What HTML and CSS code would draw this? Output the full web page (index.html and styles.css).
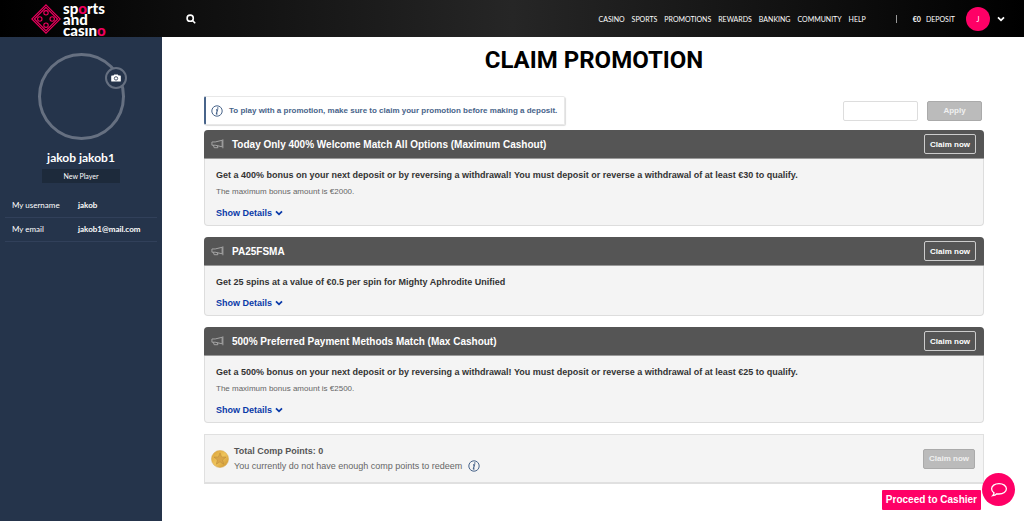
FILE: index.html
```html
<!DOCTYPE html>
<html lang="en">
  <head>
    <meta charset="utf-8" />
    <meta name="viewport" content="width=device-width, initial-scale=1" />
    <title>Claim Promotion</title>
    <link rel="stylesheet" href="styles.css">
  </head>
  <body>
    <svg class="sprite" aria-hidden="true">
      <symbol id="icon-horn" viewBox="0 0 14 12">
        <path d="M12 2 4.500 3.800H1v3.500h3.500L12 9z M12.800 1v9.600 M2.600 7.400 3.400 10h4l-.4-2" fill="none" stroke="currentColor" stroke-width="1" />
      </symbol>
      <symbol id="icon-info" viewBox="0 0 12 12">
        <circle cx="6" cy="6" r="5.2" fill="none" stroke="currentColor" stroke-width="1" />
        <path d="M5 4.9h1.5L5.4 8.7c-.1.5.4.4 1.1 0" fill="none" stroke="currentColor" stroke-width="1.2" />
        <circle cx="6.8" cy="3" r=".8" fill="currentColor" />
      </symbol>
      <symbol id="icon-chevron" viewBox="0 0 8 6">
        <path d="M1 1.4 4 4.3l3-2.9" fill="none" stroke="currentColor" stroke-width="1.8" />
      </symbol>
    </svg>

    <header class="header">
      <a href="#" class="logo">
        <svg class="logo-mark" viewBox="0 0 30 30" aria-hidden="true">
          <path d="M15 .8 29.2 15 15 29.2.8 15z M15 3.4 26.6 15 15 26.6 3.4 15z" />
          <circle cx="15" cy="8.800" r="2.200" />
          <circle cx="15" cy="21.200" r="2.200" />
          <circle cx="8.800" cy="15" r="2.200" />
          <circle cx="21.200" cy="15" r="2.200" />
        </svg>
        <span class="logo-text">sp<b>o</b>rts<br />and<br />casın<b>o</b></span>
      </a>
      <button type="button" class="search-button" aria-label="Search">
        <svg viewBox="0 0 10 10">
          <circle cx="4.2" cy="4.2" r="3.1" />
          <path d="m6.5 6.5 2.7 2.7" />
        </svg>
      </button>
      <nav class="nav">
        <a href="#">CASINO</a>
        <a href="#">SPORTS</a>
        <a href="#">PROMOTIONS</a>
        <a href="#">REWARDS</a>
        <a href="#">BANKING</a>
        <a href="#">COMMUNITY</a>
        <a href="#">HELP</a>
      </nav>
      <div class="account">
        <span class="balance">€0</span>
        <a href="#">DEPOSIT</a>
        <button type="button" class="user-button">
          <span class="initial">J</span>
          <svg class="chevron"><use href="#icon-chevron" /></svg>
        </button>
      </div>
    </header>

    <div class="page">
      <aside class="sidebar">
        <div class="avatar">
          <button type="button" class="camera-button" aria-label="Change picture">
            <svg viewBox="0 0 10 8">
              <path d="M3.2.4h3.6l.7 1.2h1.7q.6 0 .6.6v4.8q0 .6-.6.6H.8q-.6 0-.6-.6V2.2q0-.6.6-.6h1.7z" fill="#fff" />
              <circle cx="5" cy="4.4" r="1.7" fill="none" stroke="#25344b" stroke-width=".8" />
            </svg>
          </button>
        </div>
        <h2 class="player-name">jakob jakob1</h2>
        <div class="player-level">New Player</div>
        <dl class="details">
          <div class="detail">
            <dt>My username</dt>
            <dd>jakob</dd>
          </div>
          <div class="detail">
            <dt>My email</dt>
            <dd>jakob1@mail.com</dd>
          </div>
        </dl>
      </aside>

      <main class="main">
        <h1 class="title">CLAIM PROMOTION</h1>

        <div class="toolbar">
          <div class="notice">
            <svg class="info"><use href="#icon-info" /></svg>
            To play with a promotion, make sure to claim your promotion before making a deposit.
          </div>
          <form class="code-form">
            <input type="text" class="code-input" aria-label="Promotion code" />
            <button type="button" class="button button-disabled">Apply</button>
          </form>
        </div>

        <section class="promo">
          <div class="promo-header">
            <svg class="horn"><use href="#icon-horn" /></svg>
            <h3>Today Only 400% Welcome Match All Options (Maximum Cashout)</h3>
            <button type="button" class="button button-claim">Claim now</button>
          </div>
          <div class="promo-body">
            <p class="promo-text">Get a 400% bonus on your next deposit or by reversing a withdrawal! You must deposit or reverse a withdrawal of at least €30 to qualify.</p>
            <p class="promo-note">The maximum bonus amount is €2000.</p>
            <a href="#" class="show-details">Show Details <svg class="chevron"><use href="#icon-chevron" /></svg></a>
          </div>
        </section>

        <section class="promo">
          <div class="promo-header">
            <svg class="horn"><use href="#icon-horn" /></svg>
            <h3>PA25FSMA</h3>
            <button type="button" class="button button-claim">Claim now</button>
          </div>
          <div class="promo-body">
            <p class="promo-text">Get 25 spins at a value of €0.5 per spin for Mighty Aphrodite Unified</p>
            <a href="#" class="show-details">Show Details <svg class="chevron"><use href="#icon-chevron" /></svg></a>
          </div>
        </section>

        <section class="promo">
          <div class="promo-header">
            <svg class="horn"><use href="#icon-horn" /></svg>
            <h3>500% Preferred Payment Methods Match (Max Cashout)</h3>
            <button type="button" class="button button-claim">Claim now</button>
          </div>
          <div class="promo-body">
            <p class="promo-text">Get a 500% bonus on your next deposit or by reversing a withdrawal! You must deposit or reverse a withdrawal of at least €25 to qualify.</p>
            <p class="promo-note">The maximum bonus amount is €2500.</p>
            <a href="#" class="show-details">Show Details <svg class="chevron"><use href="#icon-chevron" /></svg></a>
          </div>
        </section>

        <section class="points">
          <svg class="coin" viewBox="0 0 18 18" aria-hidden="true">
            <defs>
              <linearGradient id="gold" x1="0" y1="0" x2="1" y2="1">
                <stop offset="0" stop-color="#d9a035" />
                <stop offset=".5" stop-color="#efc45c" />
                <stop offset="1" stop-color="#c98f2b" />
              </linearGradient>
            </defs>
            <circle cx="9" cy="9" r="8.5" fill="url(#gold)" stroke="#d8ab55" stroke-width=".6" />
            <path d="m9 2.800 1.600 4.100 4.400.2-3.400 2.800 1.100 4.300L9 11.800l-3.700 2.400 1.100-4.300L3 7.100l4.400-.2z" fill="#d9a548" stroke="#b98a38" stroke-width=".5" />
          </svg>
          <div class="points-text">
            <strong>Total Comp Points: 0</strong>
            <p>You currently do not have enough comp points to redeem <svg class="info"><use href="#icon-info" /></svg></p>
          </div>
          <button type="button" class="button button-disabled">Claim now</button>
        </section>

        <a href="#" class="cashier">Proceed to Cashier</a>
      </main>
    </div>

    <button type="button" class="chat-button" aria-label="Chat">
      <svg viewBox="0 0 18 16">
        <path d="M9 1.6c4.3 0 7.4 2.3 7.4 5.2S13.300 12 9 12c-.8 0-1.500-.1-2.200-.2-1 1-2.400 1.700-4.100 1.900.8-.8 1.200-1.700 1.300-2.800C2.400 9.900 1.600 8.500 1.600 6.800 1.600 3.900 4.700 1.600 9 1.600z" />
      </svg>
    </button>
  </body>
</html>
```

FILE: styles.css
```css
* {
  box-sizing: border-box;
}

body {
  margin: 0;
  min-height: 100vh;
  display: flex;
  flex-direction: column;
  font-family: "Liberation Sans", Arial, sans-serif;
  font-size: 9px;
  color: #333;
  background: #fff;
}

h1,
h2,
h3,
p,
dl,
dd {
  margin: 0;
}

a {
  color: inherit;
  text-decoration: none;
}

button {
  font: inherit;
  color: inherit;
  padding: 0;
  border: none;
  background: none;
  cursor: pointer;
}

.sprite {
  display: none;
}

.chevron {
  width: 8px;
  height: 6px;
}

.info {
  width: 12px;
  height: 12px;
  flex: none;
  color: #48648a;
}

/* header */

.header {
  display: flex;
  align-items: center;
  height: 37px;
  padding: 0 19px 0 31px;
  color: #fff;
  font-family: Lato, sans-serif;
  font-size: 7px;
  background: linear-gradient(90deg, #000 0%, #262626 50%, #000 100%);
}

.logo {
  display: flex;
  align-items: center;
  gap: 2px;
  width: 155px;
}

.logo-mark {
  width: 30px;
  height: 30px;
  fill: none;
  stroke: #f0005f;
  stroke-width: 1.1;
}

.logo-text {
  font-family: Lato, sans-serif;
  font-size: 15px;
  font-weight: 900;
  line-height: 11px;
  padding-top: 1px;
}

.logo-text b {
  font-weight: inherit;
  color: #f0005f;
}

.search-button {
  width: 10px;
  height: 10px;
}

.search-button svg {
  display: block;
  fill: none;
  stroke: #fff;
  stroke-width: 1.6;
}

.nav {
  display: flex;
  gap: 7px;
  margin-left: auto;
}

.account {
  display: flex;
  align-items: center;
  gap: 5px;
  margin-left: 30px;
}

.balance {
  padding-left: 16px;
  border-left: 1px solid #999;
  font-weight: 700;
}

.user-button {
  display: flex;
  align-items: center;
  gap: 7px;
  margin-left: 6px;
}

.initial {
  width: 24px;
  border-radius: 50%;
  line-height: 24px;
  background: #ff0066;
}

/* sidebar */

.page {
  flex: 1;
  display: flex;
}

.sidebar {
  width: 162px;
  flex: none;
  padding: 16px 5px;
  color: #fff;
  font-family: Lato, sans-serif;
  font-size: 8px;
  background: #25344b;
}

.avatar {
  position: relative;
  width: 87px;
  height: 87px;
  margin: 0 auto 11px;
  border: 3px solid #667081;
  border-radius: 50%;
}

.camera-button {
  position: absolute;
  top: 11px;
  right: -5px;
  display: flex;
  align-items: center;
  justify-content: center;
  width: 22px;
  height: 22px;
  border: 2px solid #667081;
  border-radius: 50%;
  background: #25344b;
}

.camera-button svg {
  width: 10px;
  height: 8px;
}

.player-name {
  font-size: 12px;
  line-height: 14px;
  text-align: center;
}

.player-level {
  width: 78px;
  margin: 4px auto 11px;
  line-height: 14px;
  font-size: 7px;
  text-align: center;
  background: #1d2a3b;
}

.detail {
  display: flex;
  padding: 0 7px;
  line-height: 23px;
  border-bottom: 1px solid #31405a;
}

.detail dt {
  width: 66px;
}

.detail dd {
  font-weight: 700;
}

/* main */

.main {
  flex: 1;
  display: flex;
  flex-direction: column;
  padding: 9px 40px 10px 42px;
}

.title {
  font-family: Roboto, sans-serif;
  font-size: 24px;
  font-weight: 700;
  line-height: 28px;
  text-align: center;
  color: #000;
}

.toolbar {
  display: flex;
  align-items: center;
  justify-content: space-between;
  margin: 22px 0 5px;
}

.notice {
  display: flex;
  align-items: center;
  gap: 6px;
  height: 29px;
  padding: 0 7px 0 5px;
  font-size: 8px;
  font-weight: 700;
  color: #48648a;
  border: 1px solid #e8e8e8;
  border-left: 2px solid #48648a;
  border-radius: 2px;
  box-shadow: 1px 1px 1px #ddd;
}

.code-form {
  display: flex;
  gap: 9px;
  padding-right: 2px;
}

.code-input {
  width: 75px;
  height: 20px;
  border: 1px solid #ddd;
  border-radius: 2px;
}

.button {
  height: 20px;
  font-size: 8px;
  font-weight: 700;
  color: #fff;
  border: 1px solid #ccc;
  border-radius: 2px;
}

.button-disabled {
  width: 55px;
  color: #f0f0f0;
  background: #bbb;
  border-color: #aaa;
}

.button-claim {
  width: 52px;
  margin-left: auto;
}

.promo {
  margin-bottom: 11px;
  border: 1px solid #ddd;
  border-top: none;
  border-radius: 4px;
  background: #f4f4f4;
}

.promo-header {
  display: flex;
  align-items: center;
  gap: 8px;
  height: 29px;
  margin: 0 -1px;
  padding: 0 8px 0 7px;
  color: #fff;
  background: #555;
  border-bottom: 1px solid #999;
  border-radius: 4px 4px 0 0;
}

.promo-header h3 {
  font-size: 10px;
}

.horn {
  width: 13px;
  height: 12px;
  color: #aaa;
}

.promo-body {
  padding: 8px 11px 4px;
}

.promo-text {
  font-weight: 700;
  line-height: 16px;
}

.promo-note {
  font-size: 8px;
  line-height: 17px;
  color: #666;
}

.show-details {
  display: block;
  margin-top: 5px;
  line-height: 16px;
  font-weight: 700;
  color: #0a3aa8;
}

.points {
  display: flex;
  align-items: center;
  gap: 5px;
  height: 50px;
  padding: 0 8px 0 6px;
  color: #666;
  background: #f4f4f4;
  border: 1px solid #e0e0e0;
  border-bottom-width: 2px;
}

.coin {
  width: 18px;
  height: 18px;
}

.points-text {
  margin-right: auto;
  line-height: 15px;
}

.points-text strong {
  color: #555;
}

.points-text p {
  display: flex;
  align-items: center;
  gap: 6px;
}

.points .button {
  width: 52px;
}

.cashier {
  align-self: flex-end;
  margin: 6px 3px 0 0;
  padding: 0 4px;
  line-height: 20px;
  font-size: 10px;
  font-weight: 700;
  color: #fff;
  background: #ff0066;
  border-radius: 1px;
}

.chat-button {
  position: fixed;
  right: 9px;
  bottom: 15px;
  display: flex;
  align-items: center;
  justify-content: center;
  width: 33px;
  height: 33px;
  border-radius: 50%;
  background: #ff0066;
}

.chat-button svg {
  width: 18px;
  height: 16px;
  fill: none;
  stroke: #fff;
  stroke-width: 1.3;
}
```
